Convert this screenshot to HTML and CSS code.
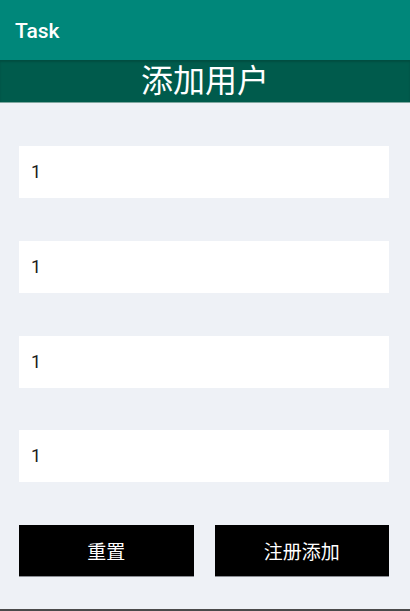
FILE: index.html
```html
<!DOCTYPE html>
<html>
<head>
    <meta charset="utf-8">
    <title>Task</title>
    <link rel="stylesheet" href="styles.css">
</head>
<body>
    <div class="app-bar">Task</div>
    <div class="title-bar">添加用户</div>

    <div class="form">
        <div class="field">1</div>
        <div class="field">1</div>
        <div class="field">1</div>
        <div class="field">1</div>

        <div class="actions">
            <button class="btn">重置</button>
            <button class="btn">注册添加</button>
        </div>
    </div>

    <div class="bottom-line"></div>
</body>
</html>
```

FILE: styles.css
```css
body {
    margin: 0;
    padding: 0;
    font-family: Roboto, "Noto Sans CJK SC", sans-serif;
    background-color: #eef1f6;
    height: 611px;
    display: flex;
    flex-direction: column;
}

.app-bar {
    height: 60px;
    box-sizing: border-box;
    padding-left: 15px;
    padding-top: 2px;
    display: flex;
    align-items: center;
    background-color: #00877a;
    color: #ffffff;
    font-size: 21px;
    font-weight: 500;
}

.title-bar {
    height: 43px;
    line-height: 43px;
    text-align: center;
    background-color: #005b4c;
    color: #ffffff;
    font-size: 32px;
    box-shadow: inset 0 2px 2px rgba(0, 0, 0, 0.15);
    border-bottom: 1px solid #7fa8a0;
    box-sizing: border-box;
}

.form {
    flex: 1;
    padding: 43px 21px 0 19px;
    display: flex;
    flex-direction: column;
    gap: 42.75px;
}

.field {
    height: 52px;
    line-height: 52px;
    padding-left: 12px;
    background-color: #ffffff;
    color: #1c1c1c;
    font-size: 18px;
}

.actions {
    display: flex;
    gap: 21px;
}

.btn {
    flex: 1;
    height: 52px;
    border: none;
    border-bottom: 1px solid #8a8d93;
    background-color: #000000;
    color: #ffffff;
    font-family: Roboto, "Noto Sans CJK SC", sans-serif;
    font-size: 19px;
    padding: 0;
}

.bottom-line {
    height: 2px;
    background-color: #4a4a4a;
}
```
